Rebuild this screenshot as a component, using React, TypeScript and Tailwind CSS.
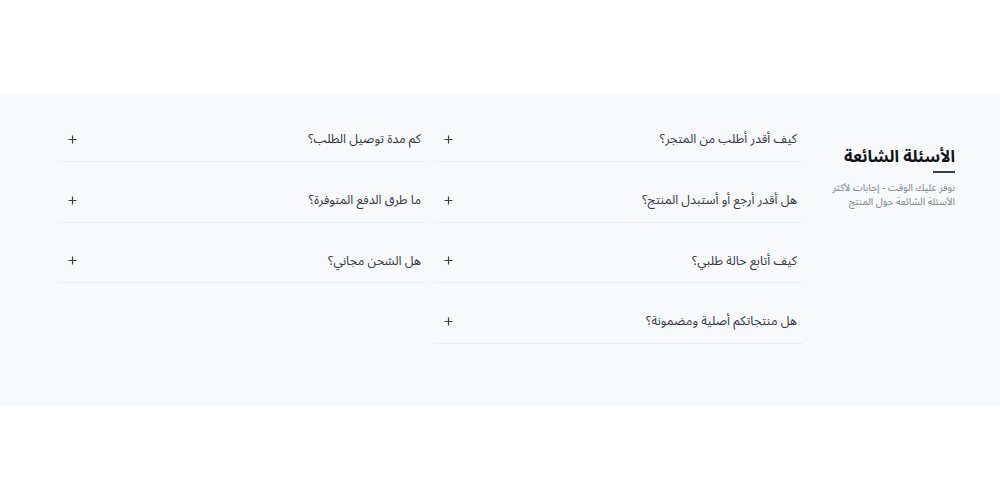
const RIGHT = [
  "كيف أقدر أطلب من المتجر؟",
  "هل أقدر أرجع أو أستبدل المنتج؟",
  "كيف أتابع حالة طلبي؟",
  "هل منتجاتكم أصلية ومضمونة؟",
];

const LEFT = ["كم مدة توصيل الطلب؟", "ما طرق الدفع المتوفرة؟", "هل الشحن مجاني؟"];

function PlusIcon() {
  return (
    <svg width="9" height="9" viewBox="0 0 9 9" fill="none" aria-hidden="true">
      <path d="M4.5 0.5v8M0.5 4.5h8" stroke="#3b3f45" strokeWidth="1.2" />
    </svg>
  );
}

function FaqItem({ q }: { q: string }) {
  return (
    <button className="w-full h-11 flex items-center justify-between pr-[6px] pl-[10px] border-b border-[#eceef1] text-right">
      <span className="text-[12.5px] text-[#33373d]">{q}</span>
      <PlusIcon />
    </button>
  );
}

export default function App() {
  return (
    <div className="w-[1000px] h-[500px] bg-white font-['Noto_Sans_Arabic','Noto_Sans',sans-serif]" dir="rtl">
      <div className="h-[94px]" />
      <section className="bg-[#f8f9fb] pt-6 pb-[62px] pr-[45px] pl-[58px] flex gap-[27px]">
        <div className="w-[125px] shrink-0 pt-[27px]">
          <h2 className="text-[16.5px] font-bold text-[#111318] leading-6 whitespace-nowrap">الأسئلة الشائعة</h2>
          <div className="w-[22px] h-[2px] bg-[#3a3d42] mt-[2px]" />
          <p className="mt-[8px] text-[10px] leading-[14px] text-[#80858d]">
            نوفر عليك الوقت - إجابات لأكثر الأسئلة الشائعة حول المنتج
          </p>
        </div>
        <div className="flex-1 grid grid-cols-2 gap-x-[7px] items-start">
          <div className="flex flex-col gap-[16.7px]">
            {RIGHT.map((q) => (
              <FaqItem key={q} q={q} />
            ))}
          </div>
          <div className="flex flex-col gap-[16.7px]">
            {LEFT.map((q) => (
              <FaqItem key={q} q={q} />
            ))}
          </div>
        </div>
      </section>
    </div>
  );
}
